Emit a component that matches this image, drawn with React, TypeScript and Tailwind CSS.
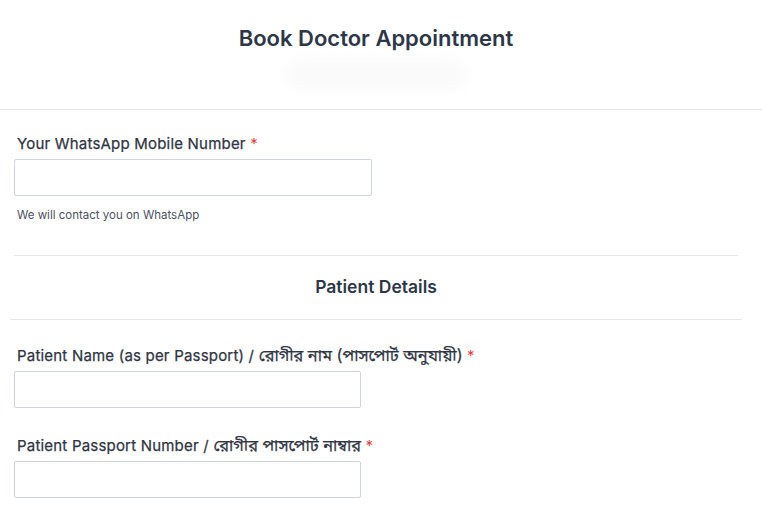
import React from "react";

const FONT = "font-['Inter','Noto_Sans','Noto_Sans_Bengali',sans-serif]";

function Field({ label, bn, width }: { label: string; bn?: string; width: string }) {
	return (
		<div className="flex flex-col">
			<label className="h-5 whitespace-nowrap pl-[3px] text-[15px] font-normal leading-5 tracking-[0.2px] text-[#2f3542] [-webkit-text-stroke:0.25px_#2f3542]">
				{label}
				{bn && <span className="text-[16.3px] leading-none tracking-normal"> {bn}</span>}{" "}
				<span className="text-[#e53e3e] [-webkit-text-stroke:0]">*</span>
			</label>
			<input
				type="text"
				className={`mt-[5px] h-[37px] ${width} rounded-[2px] border border-[#cfd3e0] bg-white outline-none`}
			/>
		</div>
	);
}

export default function App() {
	return (
		<div className={`w-[762px] h-[510px] overflow-hidden bg-white ${FONT}`}>
			{/* Header */}
			<div className="flex h-[110px] flex-col items-center border-b border-[#e3e2ea] pt-[24px] pr-[10px]">
				<h1 className="text-[22px] font-semibold leading-7 text-[#2d3748]">Book Doctor Appointment</h1>
				<div className="mt-[8px] h-[30px] w-[180px] rounded-full bg-[#fafafb] blur-[6px]" />
			</div>

			{/* WhatsApp */}
			<div className="px-[14px] pt-[24px]">
				<Field label="Your WhatsApp Mobile Number" width="w-[358px]" />
				<p className="mt-[11px] pl-[3px] text-[11.5px] leading-4 text-[#4a5160]">We will contact you on WhatsApp</p>
				<div className="mt-[32px] mr-[10px] border-t border-[#e8e8ec]" />
			</div>

			{/* Patient Details */}
			<div className="flex h-[63px] items-center justify-center pr-[10px]">
				<h2 className="text-[17.5px] font-semibold text-[#2d3748]">Patient Details</h2>
			</div>
			<div className="ml-[10px] mr-[20px] border-t border-[#e8e8ec]" />

			<div className="flex flex-col gap-[28px] px-[14px] pt-[26px]">
				<Field label="Patient Name (as per Passport) /" bn="রোগীর নাম (পাসপোর্ট অনুযায়ী)" width="w-[347px]" />
				<Field label="Patient Passport Number /" bn="রোগীর পাসপোর্ট নাম্বার" width="w-[347px]" />
			</div>
		</div>
	);
}
